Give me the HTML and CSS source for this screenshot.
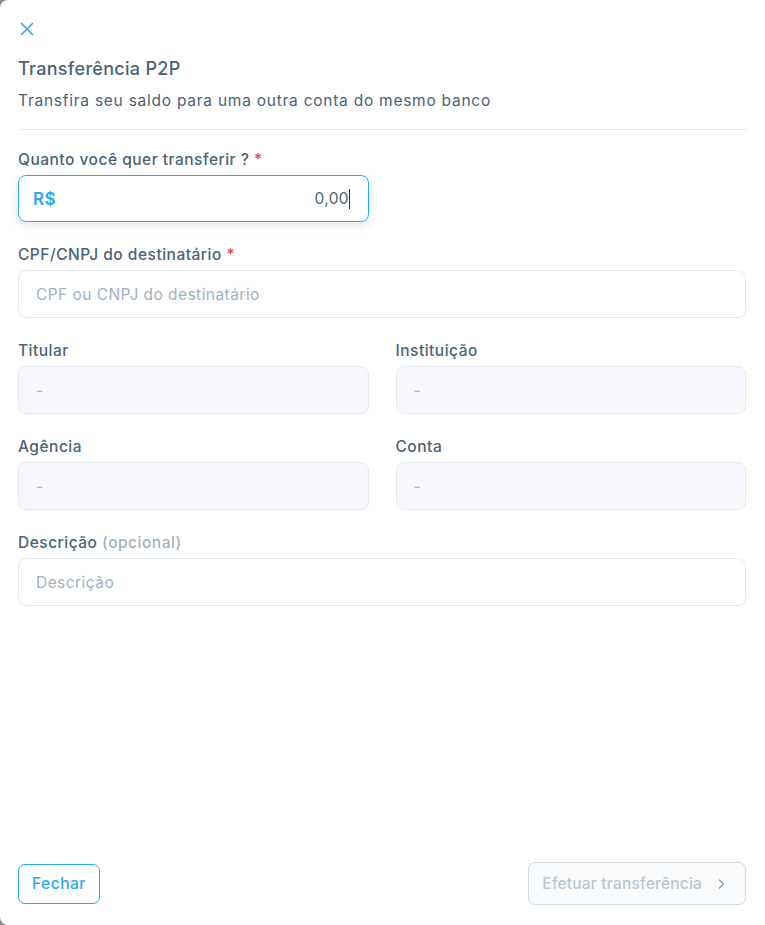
FILE: index.html
```html
<!DOCTYPE html>
<html lang="pt-BR">
<head>
  <meta charset="UTF-8" />
  <meta name="viewport" content="width=device-width, initial-scale=1.0" />
  <title>Transferência P2P</title>
  <link rel="stylesheet" href="styles.css">
</head>
<body>

  <div class="p2p-modal" role="dialog" aria-labelledby="p2p-title">

    <button class="p2p-modal__close" type="button" aria-label="Fechar">
      <svg viewBox="0 0 16 16" width="16" height="16" fill="none">
        <path d="M2.5 2.5L13.5 13.5M13.5 2.5L2.5 13.5" stroke="currentColor" stroke-width="1.6" stroke-linecap="round"></path>
      </svg>
    </button>

    <header class="p2p-modal__header">
      <h2 id="p2p-title" class="p2p-modal__title">Transferência P2P</h2>
      <p class="p2p-modal__subtitle">Transfira seu saldo para uma outra conta do mesmo banco</p>
    </header>

    <form class="p2p-form">

      <div class="field field--half">
        <label class="field__label" for="amount">Quanto você quer transferir ? <span class="field__req">*</span></label>
        <div class="money-input">
          <span class="money-input__prefix">R$</span>
          <input id="amount" class="money-input__value" type="text" value="0,00">
          <span class="money-input__caret"></span>
        </div>
      </div>

      <div class="field">
        <label class="field__label" for="document">CPF/CNPJ do destinatário <span class="field__req">*</span></label>
        <input id="document" class="field__input" type="text" placeholder="CPF ou CNPJ do destinatário">
      </div>

      <div class="field-grid">
        <div class="field">
          <label class="field__label" for="holder">Titular</label>
          <input id="holder" class="field__input" type="text" value="-" disabled>
        </div>
        <div class="field">
          <label class="field__label" for="bank">Instituição</label>
          <input id="bank" class="field__input" type="text" value="-" disabled>
        </div>
        <div class="field">
          <label class="field__label" for="branch">Agência</label>
          <input id="branch" class="field__input" type="text" value="-" disabled>
        </div>
        <div class="field">
          <label class="field__label" for="account">Conta</label>
          <input id="account" class="field__input" type="text" value="-" disabled>
        </div>
      </div>

      <div class="field">
        <label class="field__label" for="description">Descrição <span class="field__hint">(opcional)</span></label>
        <input id="description" class="field__input" type="text" placeholder="Descrição">
      </div>

    </form>

    <footer class="p2p-modal__footer">
      <button class="btn btn--outline" type="button">Fechar</button>
      <button class="btn btn--submit" type="button" disabled>
        Efetuar transferência
        <svg viewBox="0 0 10 10" width="10" height="10" fill="none">
          <path d="M3.5 1L7.5 5L3.5 9" stroke="currentColor" stroke-width="1.3" stroke-linecap="round" stroke-linejoin="round"></path>
        </svg>
      </button>
    </footer>

  </div>

</body>
</html>
```

FILE: styles.css
```css
/* Palette for the transfer modal */
:root {
  --p2p-blue: #29a9ec;
  --p2p-text: #4a6376;
  --p2p-muted: #9fb2c1;
  --p2p-border: #e6e9ee;
  --p2p-disabled-bg: #f6f8fb;
  --p2p-danger: #e5484d;
}

* {
  box-sizing: border-box;
}

html, body {
  height: 100%;
}

body {
  margin: 0;
  background: #8c8c8c;
  font-family: 'Inter', 'Open Sans', sans-serif;
  color: var(--p2p-text);
}

/* Modal shell fills the viewport */
.p2p-modal {
  height: 100%;
  display: flex;
  flex-direction: column;
  background: #fff;
  border-radius: 8px 0 0 8px;
  padding: 21px 19px 20px 18px;
}

.p2p-modal__close {
  align-self: flex-start;
  display: flex;
  padding: 0;
  margin: 0 0 0 1px;
  border: 0;
  background: none;
  color: var(--p2p-blue);
  cursor: pointer;
}

.p2p-modal__header {
  margin-top: 19px;
  padding-bottom: 17px;
  border-bottom: 1px solid var(--p2p-border);
}

.p2p-modal__title {
  margin: 0;
  font-size: 18px;
  font-weight: 500;
  letter-spacing: 0.3px;
  line-height: 26px;
}

.p2p-modal__subtitle {
  margin: 8px 0 0;
  font-size: 15.5px;
  letter-spacing: 0.75px;
  line-height: 22px;
}

/* Form fields */
.p2p-form {
  display: flex;
  flex-direction: column;
  gap: 22px;
  padding-top: 19px;
}

.field {
  display: flex;
  flex-direction: column;
  gap: 4px;
}

.field--half {
  width: 351px;
}

.field__label {
  font-size: 15.5px;
  font-weight: 500;
  letter-spacing: 0.5px;
  line-height: 22px;
}

.field__req {
  color: var(--p2p-danger);
}

.field__hint {
  color: var(--p2p-muted);
}

.field__input {
  height: 48px;
  width: 100%;
  padding: 0 17px;
  border: 1px solid var(--p2p-border);
  border-radius: 8px;
  background: #fff;
  font-family: inherit;
  font-size: 15.5px;
  letter-spacing: 0.45px;
  color: var(--p2p-text);
  outline: none;
}

.field__input::placeholder {
  color: var(--p2p-muted);
}

.field__input:disabled {
  background: var(--p2p-disabled-bg);
  color: #a9b8c4;
}

.field-grid {
  display: grid;
  grid-template-columns: 1fr 1fr;
  column-gap: 27px;
  row-gap: 22px;
}

/* Amount input with currency prefix */
.money-input {
  height: 47px;
  display: flex;
  align-items: center;
  padding: 0 18px 0 14px;
  border: 1px solid var(--p2p-blue);
  border-radius: 8px;
  box-shadow: 0 4px 10px rgba(30, 50, 70, 0.12);
}

.money-input__prefix {
  color: var(--p2p-blue);
  font-size: 17px;
  font-weight: 600;
  letter-spacing: 0.3px;
}

.money-input__value {
  flex: 1;
  min-width: 0;
  border: 0;
  outline: none;
  padding: 0;
  text-align: right;
  font-family: inherit;
  font-size: 15.5px;
  letter-spacing: 0.4px;
  color: var(--p2p-text);
  background: transparent;
}

.money-input__caret {
  width: 1px;
  height: 20px;
  background: #333;
}

/* Footer buttons */
.p2p-modal__footer {
  margin-top: auto;
  display: flex;
  justify-content: space-between;
  align-items: center;
}

.btn {
  display: inline-flex;
  align-items: center;
  gap: 14px;
  font-family: inherit;
  font-size: 15.5px;
  font-weight: 500;
  letter-spacing: 0.5px;
  border-radius: 7px;
  cursor: pointer;
}

.btn--outline {
  height: 40px;
  padding: 0 13px;
  border: 1px solid var(--p2p-blue);
  background: #fff;
  color: var(--p2p-blue);
}

.btn--submit {
  height: 43px;
  padding: 0 19px 0 13px;
  border: 1px solid #cfd9e1;
  background: #f8fafc;
  color: #bac7d1;
  letter-spacing: 0.2px;
  cursor: not-allowed;
}

.btn--submit svg {
  color: #8a9cab;
}
```
